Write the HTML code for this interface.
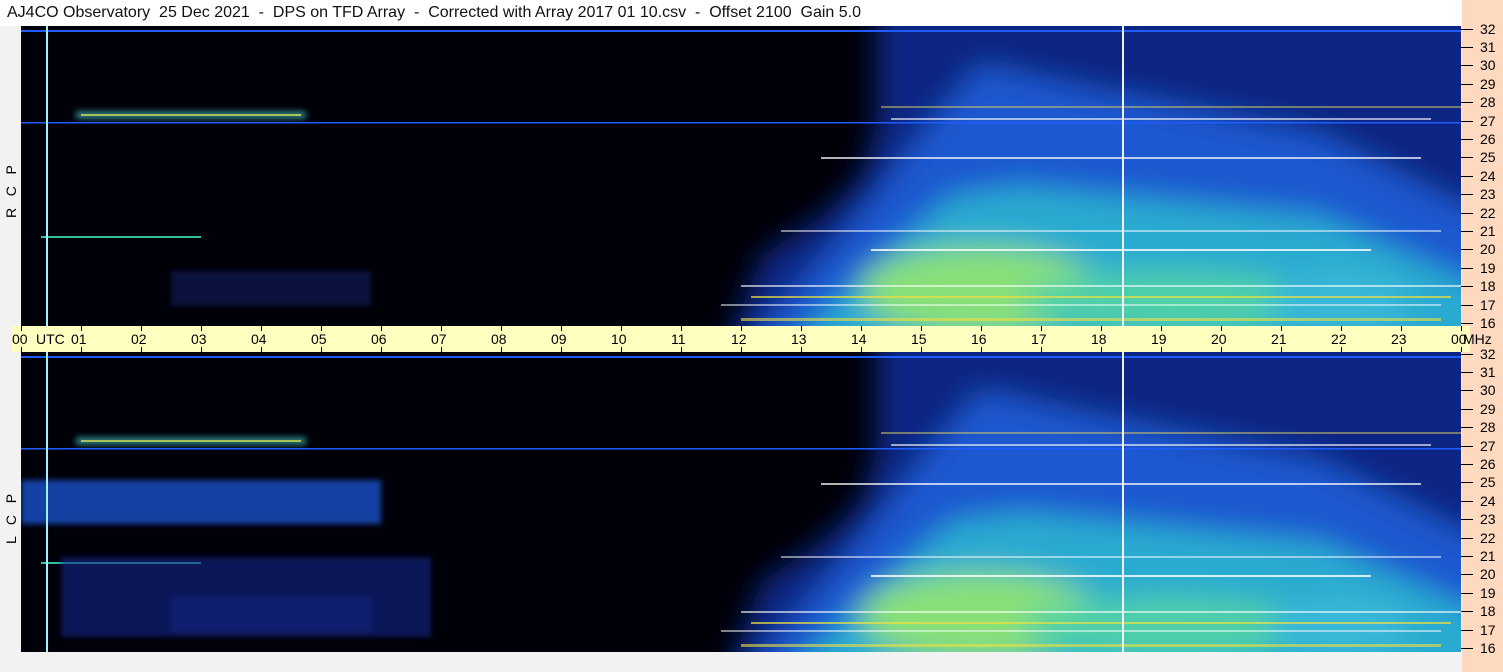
<!DOCTYPE html>
<html><head><meta charset="utf-8"><style>
body{margin:0;width:1503px;height:672px;overflow:hidden;background:#f2f2f2;font-family:"Liberation Sans",sans-serif;position:relative}
.t{position:absolute;left:0;top:0;width:1462px;height:26px;background:#fff;font-size:16px;line-height:26px;padding-left:7px;box-sizing:border-box;white-space:pre;color:#111}
.right{position:absolute;left:1462px;top:0;width:41px;height:672px;background:#fdd9bf}
.band{position:absolute;left:12px;top:326px;width:1458px;height:26px;background:#ffffc0}
.lbl{position:absolute;font-size:14px;color:#000}
.pan{position:absolute;left:21px;width:1440px;height:300px}
.side{position:absolute;font-size:14px;white-space:pre;transform:rotate(-90deg);transform-origin:left top;line-height:16px}
</style></head><body>
<div class="t">AJ4CO Observatory  25 Dec 2021  -  DPS on TFD Array  -  Corrected with Array 2017 01 10.csv  -  Offset 2100  Gain 5.0</div>
<div class="right"></div>
<div class="band"></div>
<svg width="0" height="0" style="position:absolute"><defs>
<filter id="b" x="-20%" y="-20%" width="140%" height="140%"><feGaussianBlur stdDeviation="14"/></filter>
<filter id="b2" x="-20%" y="-50%" width="140%" height="200%"><feGaussianBlur stdDeviation="3"/></filter>
<g id="spec">
<rect width="1440" height="300" fill="#000008"/>
<g filter="url(#b)">
<polygon points="700,340 740,230 800,190 840,150 855,100 855,-40 1500,-40 1500,340" fill="#0a2584"/>
<polygon points="710,340 830,200 900,110 960,40 1050,60 1300,110 1440,180 1500,200 1500,340" fill="#1a58d0"/>
<polygon points="750,340 850,240 930,170 1000,160 1300,190 1460,260 1500,340" fill="#2aaad0"/>
<ellipse cx="960" cy="265" rx="120" ry="45" fill="#88e078"/>
<ellipse cx="1150" cy="275" rx="150" ry="30" fill="#50d0a8"/>
<ellipse cx="1320" cy="275" rx="70" ry="30" fill="#38b8d8"/>
</g>
<g filter="url(#b2)">
<rect x="55" y="85" width="230" height="8" fill="#2a7a80"/>
<rect x="150" y="245" width="200" height="35" fill="#0c2060" opacity=".6"/>
</g>
<rect x="60" y="88" width="220" height="2" fill="#c8d850" opacity=".8"/>
<rect x="20" y="210" width="160" height="2" fill="#30c0a0"/>
<rect x="0" y="96" width="1440" height="1.5" fill="#1e5cff"/>
<rect x="0" y="4" width="1440" height="2" fill="#1e5cff"/>
<rect x="860" y="80" width="580" height="2" fill="#e0d060" opacity=".5"/>
<rect x="870" y="92" width="540" height="2" fill="#fff" opacity=".6"/>
<rect x="800" y="131" width="600" height="2" fill="#fff" opacity=".7"/>
<rect x="760" y="204" width="660" height="2" fill="#fff" opacity=".5"/>
<rect x="850" y="223" width="500" height="2" fill="#fff" opacity=".8"/>
<rect x="720" y="259" width="720" height="2" fill="#fff" opacity=".6"/>
<rect x="730" y="270" width="700" height="2" fill="#f0e040" opacity=".7"/>
<rect x="700" y="278" width="720" height="2" fill="#fff" opacity=".5"/>
<rect x="720" y="292" width="700" height="3" fill="#f0e040" opacity=".6"/>
<rect x="25" y="0" width="2" height="300" fill="#a0f0ff"/>
<rect x="1101" y="0" width="2" height="300" fill="#f0f0ff"/>
</g>
</defs></svg>
<svg class="pan" style="top:26px" viewBox="0 0 1440 300"><use href="#spec"/></svg>
<svg class="pan" style="top:352px" viewBox="0 0 1440 300"><use href="#spec"/>
<g filter="url(#b2)"><rect x="0" y="128" width="360" height="44" fill="#1a4ec0" opacity=".85"/><rect x="40" y="205" width="370" height="80" fill="#0e2a90" opacity=".6"/></g>
<rect x="25" y="0" width="2" height="300" fill="#a0f0ff"/></svg>
<div class="side" style="left:3px;top:218px">R   C   P</div>
<div class="side" style="left:3px;top:544px">L   C   P</div>
<div id="ax"></div>
<script>
var h='';
var hrs=['00','01','02','03','04','05','06','07','08','09','10','11','12','13','14','15','16','17','18','19','20','21','22','23','00'];
for(var i=0;i<25;i++){var x=21+i*60;
h+='<div class="lbl" style="left:'+(x-(i==0?9:10))+'px;top:331px">'+hrs[i]+'</div>';
h+='<div style="position:absolute;left:'+x+'px;top:326px;width:1px;height:5px;background:#000"></div>';
h+='<div style="position:absolute;left:'+x+'px;top:347px;width:1px;height:5px;background:#000"></div>';}
h+='<div class="lbl" style="left:36px;top:331px">UTC</div><div class="lbl" style="left:1463px;top:331px">MHz</div>';
for(var f=16;f<=32;f++){var y1=323-(f-16)*18.4,y2=648-(f-16)*18.4;
[y1,y2].forEach(function(y){h+='<div style="position:absolute;left:1461px;top:'+Math.round(y)+'px;width:12px;height:1px;background:#000"></div><div class="lbl" style="left:1480px;top:'+Math.round(y-8)+'px">'+f+'</div>';});}
document.getElementById('ax').innerHTML=h;
</script>
</body></html>
